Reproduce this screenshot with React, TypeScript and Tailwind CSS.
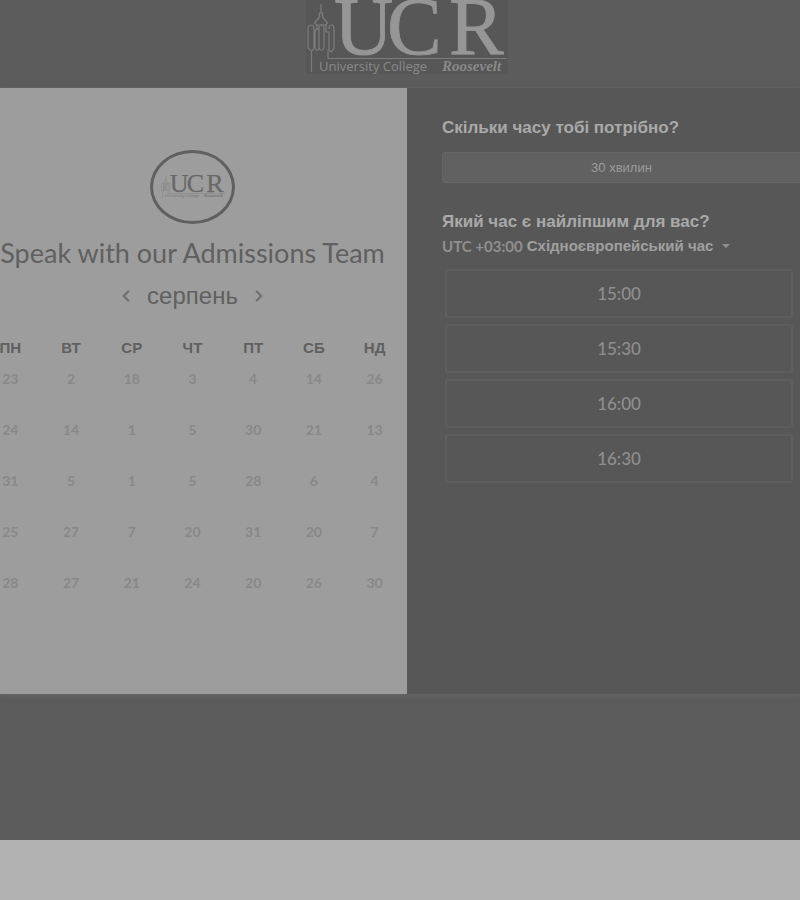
import { ChevronLeft, ChevronRight } from "lucide-react";

const weekdays = ["ПН", "ВТ", "СР", "ЧТ", "ПТ", "СБ", "НД"];
const weeks = [
  [23, 2, 18, 3, 4, 14, 26],
  [24, 14, 1, 5, 30, 21, 13],
  [31, 5, 1, 5, 28, 6, 4],
  [25, 27, 7, 20, 31, 20, 7],
  [28, 27, 21, 24, 20, 26, 30],
];
const slots = ["15:00", "15:30", "16:00", "16:30"];

function Logo({ className }: { className: string }) {
  return (
    <svg viewBox="0 0 202 74" className={className} role="img" aria-label="University College Roosevelt">
      <g fill="none" stroke="currentColor" strokeWidth="1.200" opacity="0.6">
        <path d="M15 4v9M13.500 13h3v4l5 6-2 2h-9l-2-2 5-6z" />
        <path d="M5.500 72V51L2 48V29q0-4 3-4t3 4v19l-2 3M8 31l3-2V25M9 48V32q0-3 2-3t2 3v16q-2 5-4 0zM13 29q0-4 2.500-4t2.500 4v19q-2.500 5-5 0zM20 25v7M20 32h3v18h-2M23 29q0-4 2.500-4t2.500 4v20l-3 3-2-2M22 51v7.500h179" />
      </g>
      <g fill="currentColor" stroke="currentColor" strokeWidth="0.800" fontFamily="'Liberation Serif', serif" fontSize="82">
        <text x="28" y="54">U</text>
        <text x="81" y="54">C</text>
        <text x="143" y="54">R</text>
      </g>
      <g fill="currentColor" opacity="0.8">
        <text x="13" y="71" fontFamily="'Open Sans', sans-serif" fontSize="13">University College</text>
        <text x="136" y="71" fontFamily="'Liberation Serif', serif" fontSize="15" fontStyle="italic" fontWeight="700">Roosevelt</text>
      </g>
    </svg>
  );
}

function Calendar() {
  return (
    <section className="-ml-5 flex w-[427px] shrink-0 flex-col items-center bg-[#9d9d9d] pt-[62px] pr-0.5 text-[#606060]">
      <div className="flex h-[74px] w-[85px] items-center justify-center rounded-[50%] border-3 border-[#606060]">
        <Logo className="w-[64px] text-[#686868]" />
      </div>
      <h1 className="mt-[11px] text-[27px] leading-9 whitespace-nowrap">Speak with our Admissions Team</h1>
      <div className="mt-[9px] flex h-8 items-center gap-3">
        <button type="button" aria-label="Попередній місяць" className="text-[#707070]">
          <ChevronLeft size={18} strokeWidth={3} />
        </button>
        <h2 className="font-['Liberation_Sans',sans-serif] text-[24px] leading-8">серпень</h2>
        <button type="button" aria-label="Наступний місяць" className="text-[#707070]">
          <ChevronRight size={18} strokeWidth={3} />
        </button>
      </div>
      <table className="mt-[26px] w-full table-fixed text-center">
        <thead>
          <tr className="h-5 font-['Liberation_Sans',sans-serif] text-[15px] leading-5">
            {weekdays.map((day) => (
              <th key={day} scope="col" className="font-bold">{day}</th>
            ))}
          </tr>
        </thead>
        <tbody>
          {weeks.map((week, row) => (
            <tr key={row} className="h-[51px] align-top">
              {week.map((date, column) => (
                <td key={column} className="p-0 pt-2">
                  <button type="button" className="px-2 text-[14px] leading-6 font-bold text-[#888888]">{date}</button>
                </td>
              ))}
            </tr>
          ))}
        </tbody>
      </table>
    </section>
  );
}

function TimePicker() {
  return (
    <section className="min-w-0 grow bg-[#575757] pt-7 pl-[35px] text-[#a9a9a9]">
      <h2 className="font-['Liberation_Sans',sans-serif] text-[17px] leading-6 font-bold">Скільки часу тобі потрібно?</h2>
      <button
        type="button"
        className="mt-3 block h-[31px] w-full rounded-l-[3px] border border-r-0 border-[#666666] bg-[#616161] font-['Liberation_Sans',sans-serif] text-[13px] text-[#9b9b9b]"
      >
        30 хвилин
      </button>
      <h2 className="mt-[27px] font-['Liberation_Sans',sans-serif] text-[17px] leading-6 font-bold">Який час є найліпшим для вас?</h2>
      <div className="mt-0.5 flex h-5 items-center gap-1 text-[15px] leading-5 font-bold text-[#909090]">
        <label htmlFor="timezone">UTC +03:00</label>
        <select id="timezone" className="appearance-none font-['Liberation_Sans',sans-serif] text-[15px] leading-5 font-bold text-[#a0a0a0]">
          <option>Східноєвропейський час</option>
        </select>
        <svg viewBox="0 0 8 4" className="ml-1 h-1 w-2" aria-hidden="true">
          <path d="M0 0h8L4 4z" fill="currentColor" />
        </svg>
      </div>
      <div className="mt-[13px] mr-[7px] ml-[3px] flex flex-col gap-1.5">
        {slots.map((slot) => (
          <button
            key={slot}
            type="button"
            className="h-[49px] rounded-[3px] border-2 border-[#5e5e5e] text-[17px] font-medium text-[#8f8f8f]"
          >
            {slot}
          </button>
        ))}
      </div>
    </section>
  );
}

export default function App() {
  return (
    <div className="flex min-h-screen flex-col overflow-x-hidden bg-[#b2b2b2] font-[Lato,sans-serif]">
      <div className="bg-[#5c5c5c] pb-[146px]">
        <header className="flex h-[88px] justify-center border-b border-[#606060] pl-[14px]">
          <Logo className="h-[74px] w-[202px] bg-[#575757] text-[#969696]" />
        </header>
        <main className="flex min-h-[606px] shadow-[0_2px_4px_#666666]">
          <Calendar />
          <TimePicker />
        </main>
      </div>
    </div>
  );
}
